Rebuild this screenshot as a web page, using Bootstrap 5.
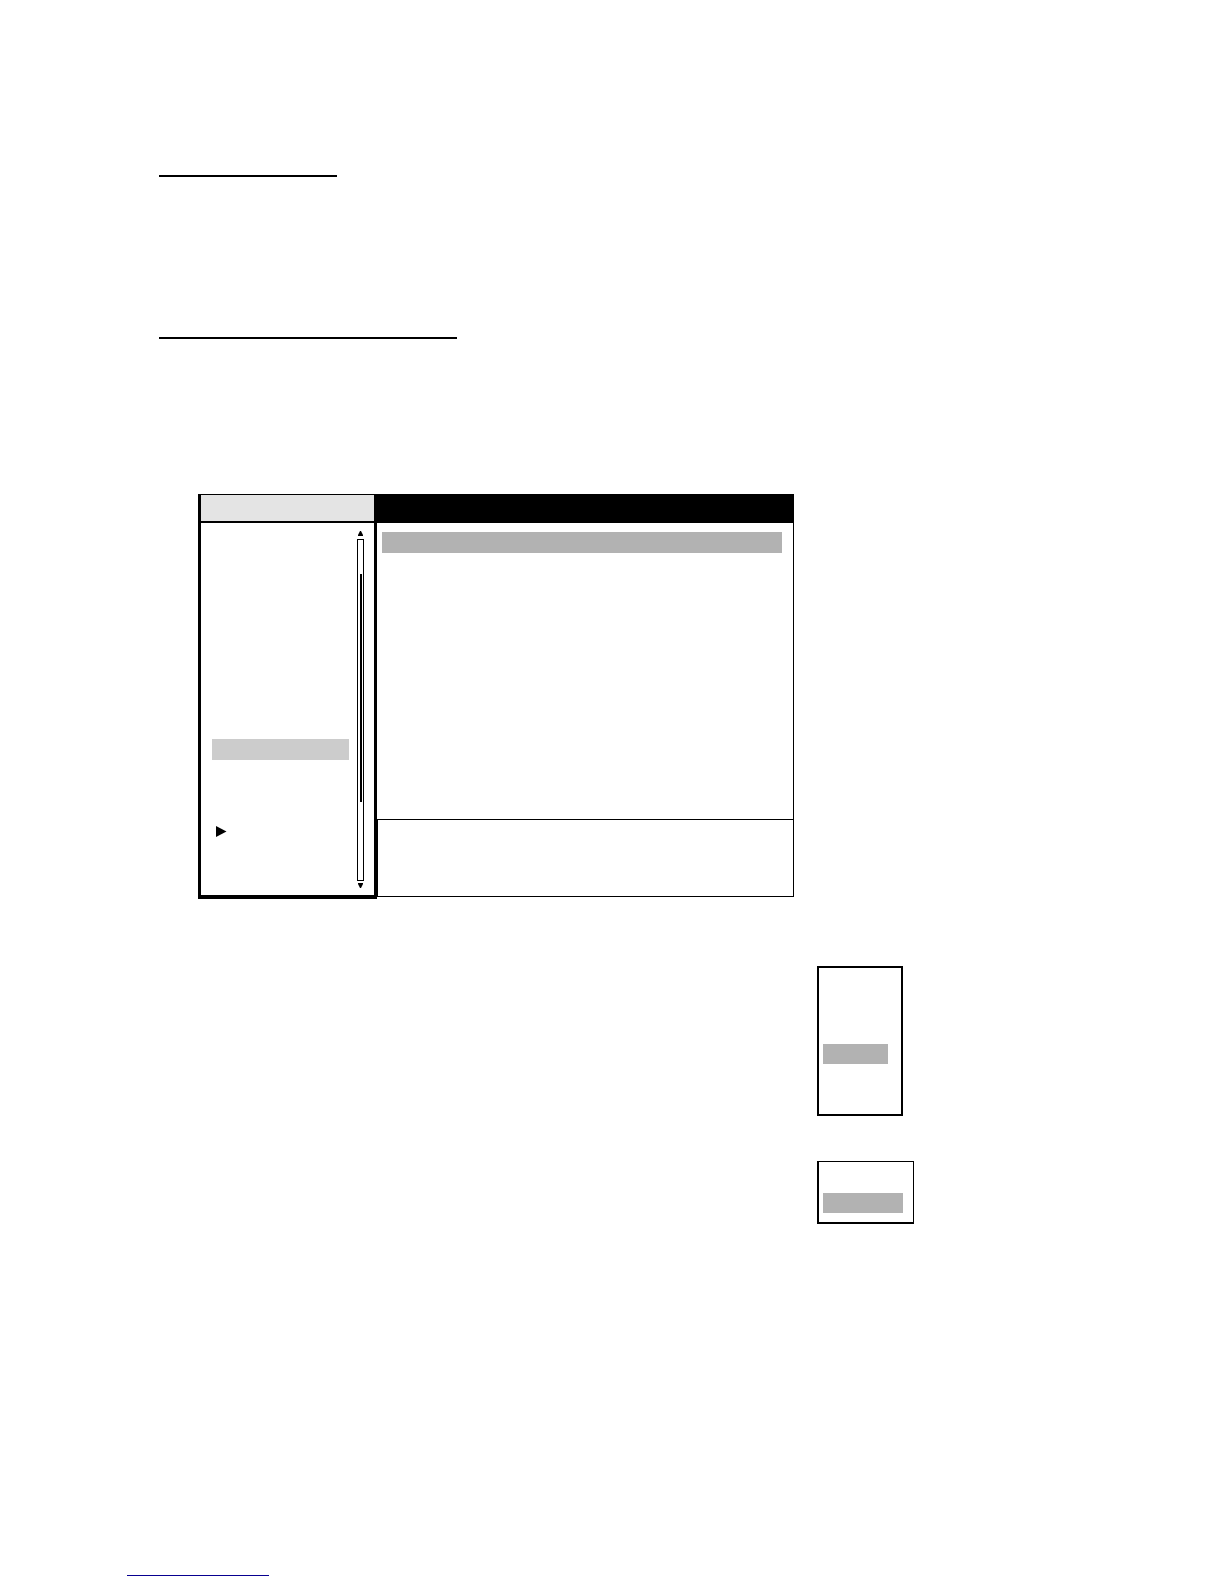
<!DOCTYPE html>
<html lang="en">
<head>
<meta charset="utf-8">
<meta name="viewport" content="width=device-width, initial-scale=1">
<title>Menu</title>
<link href="https://cdn.jsdelivr.net/npm/bootstrap@5.3.0/dist/css/bootstrap.min.css" rel="stylesheet">
<style>
body { background: #fff; font-family: "Liberation Sans", sans-serif; }
.sheet { padding: 175px 32px 8px 127px; }
.content { padding-left: 32px; }
.rule { height: 2px; background: #000; opacity: 1; border: 0; margin: 0; max-width: 100%; }
.rule-short { width: 178px; margin-bottom: 160px; }
.rule-long { width: 298px; margin-bottom: 155px; }
.osd { max-width: 596px; margin-left: 39px; }
.side { flex: 0 0 179px; border: solid #000; border-width: 1px 3px 4px; }
.side-head { height: 28px; background: #e4e4e4; border-bottom: 2px solid #000; }
.side-body { height: 372px; padding: 0 10px 0 11px; gap: 8px; }
.side-list { padding-top: 216px; gap: 66px; }
.pick-side { height: 21px; background: #cccccc; }
.pointer { margin-left: 4px; }
.scroller { width: 7px; padding: 8px 0 7px; }
.track { border: 1px solid #000; margin: 3px 0 2px; padding: 34px 1px 0 2px; }
.thumb { height: 228px; width: 2px; background: #000; }
.pane-head { height: 29px; background: #000; }
.pane-body { height: 296px; padding: 9px 11px 0 5px; border-right: 1px solid #000; }
.pick { background: #b2b2b2; height: 20px; }
.pick-pane { height: 21px; }
.pane-foot { height: 78px; border: 1px solid #000; }
.menus { padding: 67px 0 351px 658px; gap: 45px; }
.menu-tall { width: 86px; height: 150px; border: 2px solid #000; padding: 76px 13px 0 4px; }
.menu-low { width: 97px; height: 63px; border: solid #000; border-width: 1px 1px 2px 2px; padding: 31px 10px 0 4px; }
.foot-rule { width: 142px; height: 1px; background: #080090; opacity: 1; border: 0; margin: 0; }
</style>
<script src="https://cdn.jsdelivr.net/npm/bootstrap@5.3.0/dist/js/bootstrap.bundle.min.js"></script>
</head>
<body>
<div class="sheet">
  <main class="content">
    <hr class="rule rule-short">
    <hr class="rule rule-long">

    <section class="osd d-flex align-items-start">
      <div class="side">
        <div class="side-head"></div>
        <div class="side-body d-flex">
          <div class="side-list d-flex flex-column flex-grow-1">
            <div class="pick-side"></div>
            <svg class="pointer" width="11" height="11" viewBox="0 0 11 11"><path d="M0 0L10.5 5.5L0 11Z"/></svg>
          </div>
          <div class="scroller d-flex flex-column align-items-stretch">
            <svg class="d-block mx-auto flex-shrink-0" width="5" height="5" viewBox="0 0 5 5"><path d="M2 0H3L5 4V5H0V4Z"/></svg>
            <div class="track flex-grow-1"><div class="thumb"></div></div>
            <svg class="d-block mx-auto flex-shrink-0" width="5" height="5" viewBox="0 0 5 5"><path d="M0 0H5V1L3 5H2L0 1Z"/></svg>
          </div>
        </div>
      </div>
      <div class="flex-grow-1">
        <div class="pane-head"></div>
        <div class="pane-body"><div class="pick pick-pane"></div></div>
        <div class="pane-foot"></div>
      </div>
    </section>

    <section class="menus d-flex flex-column">
      <div class="menu-tall"><div class="pick"></div></div>
      <div class="menu-low"><div class="pick"></div></div>
    </section>
  </main>
  <footer><hr class="foot-rule"></footer>
</div>
</body>
</html>
